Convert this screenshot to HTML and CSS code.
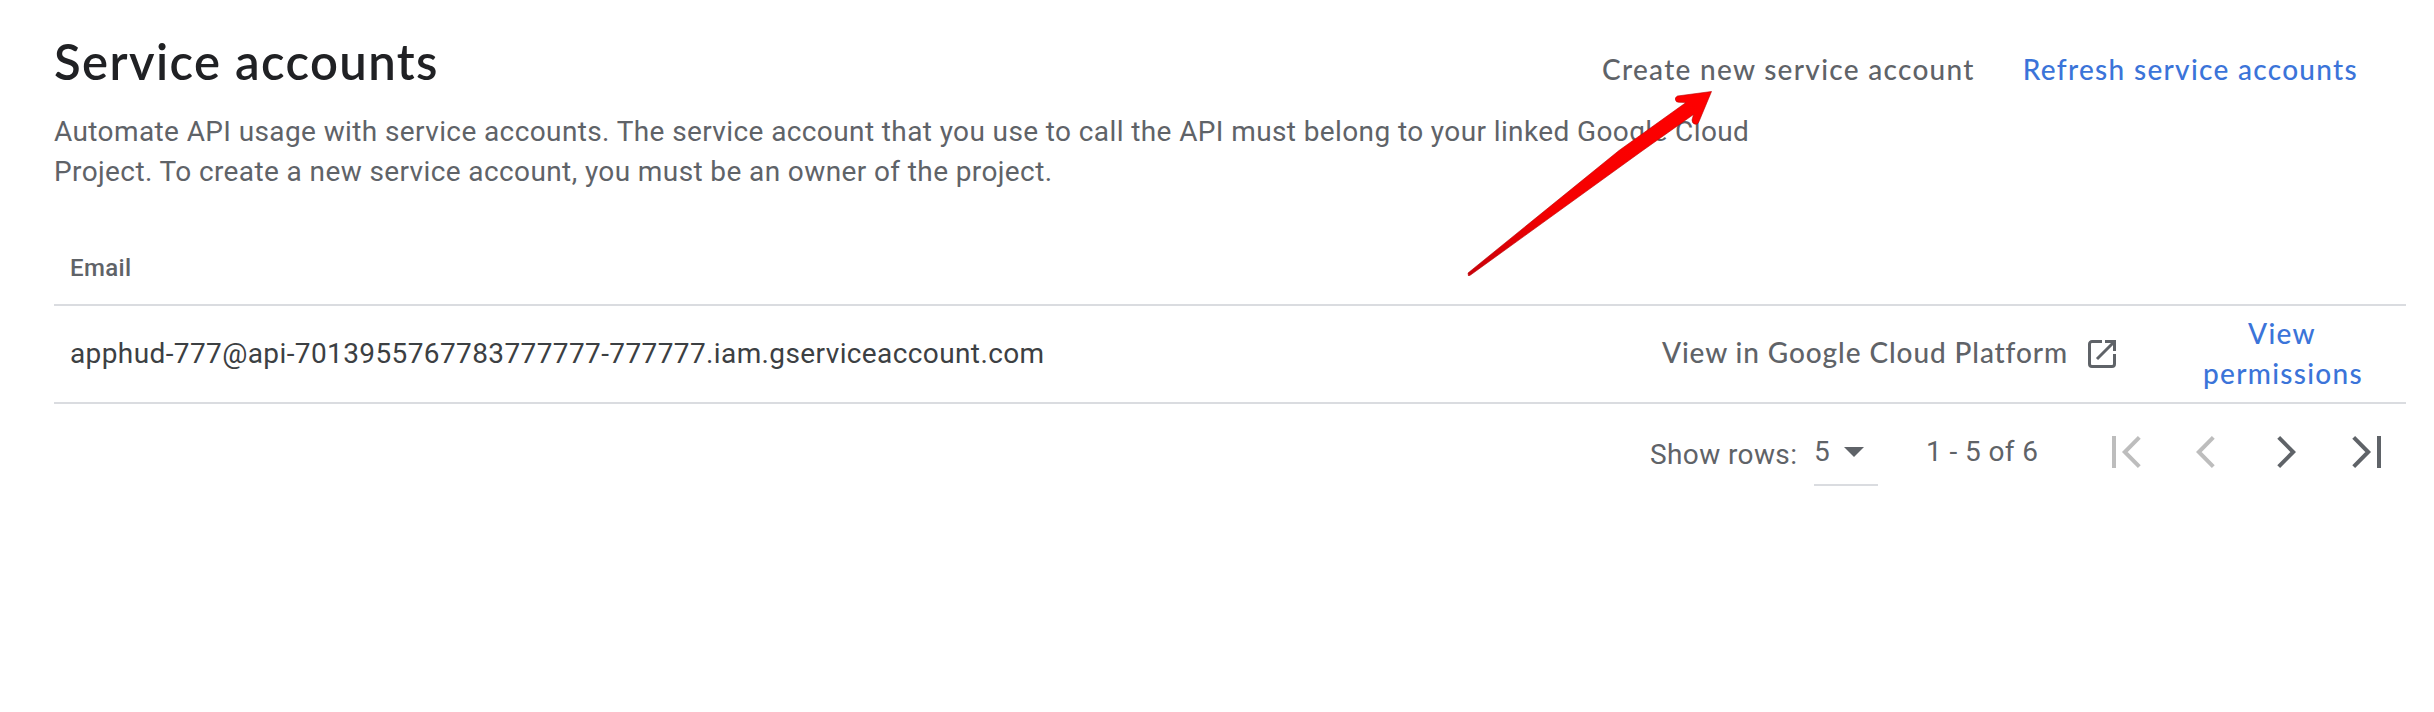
FILE: index.html
```html
<!DOCTYPE html>
<html lang="en">
<head>
<meta charset="utf-8">
<title>Service accounts</title>
<link rel="stylesheet" href="styles.css">
</head>
<body>
<main class="panel">
  <header class="header">
    <h1 class="title">Service accounts</h1>
    <div class="actions">
      <a class="action muted create">Create new service account</a>
      <a class="action primary refresh">Refresh service accounts</a>
    </div>
  </header>
  <p class="description">Automate API usage with service accounts. The service account that you use to call the API must belong to your linked Google Cloud<br>Project. To create a new service account, you must be an owner of the project.</p>
  <section class="table">
    <div class="table-head">Email</div>
    <div class="table-row">
      <div class="email">apphud-777@api-7013955767783777777-777777.iam.gserviceaccount.com</div>
      <a class="action muted platform">
        <span class="platform-label">View in Google Cloud Platform</span>
        <svg class="open-icon" viewBox="0 0 28 28"><path d="M14 1.5H4A2.5 2.5 0 0 0 1.5 4v20A2.5 2.5 0 0 0 4 26.500h20a2.500 2.500 0 0 0 2.500-2.500V14M17 1.500h9.500V11M26 2L9 19" fill="none" stroke="currentColor" stroke-width="3"/></svg>
      </a>
      <a class="action primary permissions"><span class="view">View</span><br>permissions</a>
    </div>
  </section>
  <footer class="pager">
    <span class="rows-label">Show rows:</span>
    <span class="rows-select">5<svg class="caret" viewBox="0 0 20 10"><path d="M0 0h20L10 10z" fill="currentColor"/></svg></span>
    <span class="range">1 - 5 of 6</span>
    <svg class="nav-icon first disabled" viewBox="0 0 29 32"><path d="M2 0v32M27.300 1.400L12.800 16l14.500 14.600"/></svg>
    <svg class="nav-icon prev disabled" viewBox="0 0 19 32"><path d="M17.300 1.400L2.800 16l14.500 14.600"/></svg>
    <svg class="nav-icon next" viewBox="0 0 19 32"><path d="M1.700 1.400L16.200 16L1.700 30.600"/></svg>
    <svg class="nav-icon last" viewBox="0 0 29 32"><path d="M1.700 1.400L16.200 16L1.700 30.600M27 0v32"/></svg>
  </footer>
  <svg class="pointer" viewBox="0 0 246 186">
    <defs><linearGradient id="red" x1="0" y1="1" x2="1" y2="0"><stop offset="0" stop-color="#c8000a"/><stop offset=".35" stop-color="#f50000"/><stop offset="1" stop-color="#ff0000"/></linearGradient></defs>
    <path d="M244.500 1.500L210.500 6Q207.500 7.500 208.500 10Q209 12.500 212 12.300L219 12.500L152 60.500L1 183L1.500 186L3.500 185L175 61L226.500 24.500L225 30Q225 33.500 228 34.200Q231 35 232 31.500Z" fill="url(#red)" stroke="#b00" stroke-width=".6"/>
  </svg>
</main>
</body>
</html>
```
FILE: styles.css
```css
* { box-sizing: border-box; }
body { margin: 0; background: #fff; }
.panel {
  position: relative;
  width: 2434px;
  height: 712px;
  padding: 29px 28px 0 54px;
  font-family: Roboto, sans-serif;
  font-size: 28px;
  line-height: 40px;
  letter-spacing: .39px;
  color: #5f6368;
}
.header { display: flex; justify-content: space-between; height: 83px; }
.title {
  margin: 0;
  font: 600 49px/64px Lato, sans-serif;
  letter-spacing: 1.4px;
  color: #202124;
}
.actions { display: flex; gap: 48px; padding: 20px 48px 0 0; }
.action { font-family: Lato, sans-serif; font-weight: 500; white-space: nowrap; letter-spacing: 1.3px; }
.muted { color: #5f6368; }
.primary { color: #3b74d9; }
.description { margin: 0; height: 79px; white-space: nowrap; }
.table-head {
  height: 115px;
  padding: 57px 16px 0;
  border-bottom: 2px solid #dadce0;
  font-size: 24px;
  font-weight: 500;
}
.table-row {
  display: flex;
  align-items: center;
  height: 98px;
  padding: 0 45px 0 16px;
  border-bottom: 2px solid #dadce0;
}
.email { flex: 1; color: #3c4043; }
.platform { display: flex; align-items: center; gap: 20px; margin-right: 87px; letter-spacing: .9px; }
.platform-label { padding-bottom: 4px; }
.open-icon { width: 28px; height: 28px; }
.permissions { width: 158px; padding-bottom: 3px; text-align: center; }
.pager { display: flex; height: 100px; padding: 28px 0 0 1596px; white-space: nowrap; }
.rows-label { width: 164px; padding-top: 3px; }
.rows-select { width: 64px; height: 54px; border-bottom: 2px solid #dadce0; }
.caret { width: 20px; height: 10px; margin: 0 0 4px 14px; }
.range { width: 187px; padding: 0 0 0 48px; }
.nav-icon { height: 32px; margin-top: 4px; fill: none; stroke: currentColor; stroke-width: 4; }
.disabled { color: #bdbdbd; }
.first { width: 29px; margin-left: 47px; }
.prev { width: 19px; margin-left: 55px; }
.next { width: 19px; margin-left: 62px; }
.last { width: 29px; margin-left: 56px; }
.pointer { position: absolute; left: 1467px; top: 90px; width: 246px; height: 186px; }
```
